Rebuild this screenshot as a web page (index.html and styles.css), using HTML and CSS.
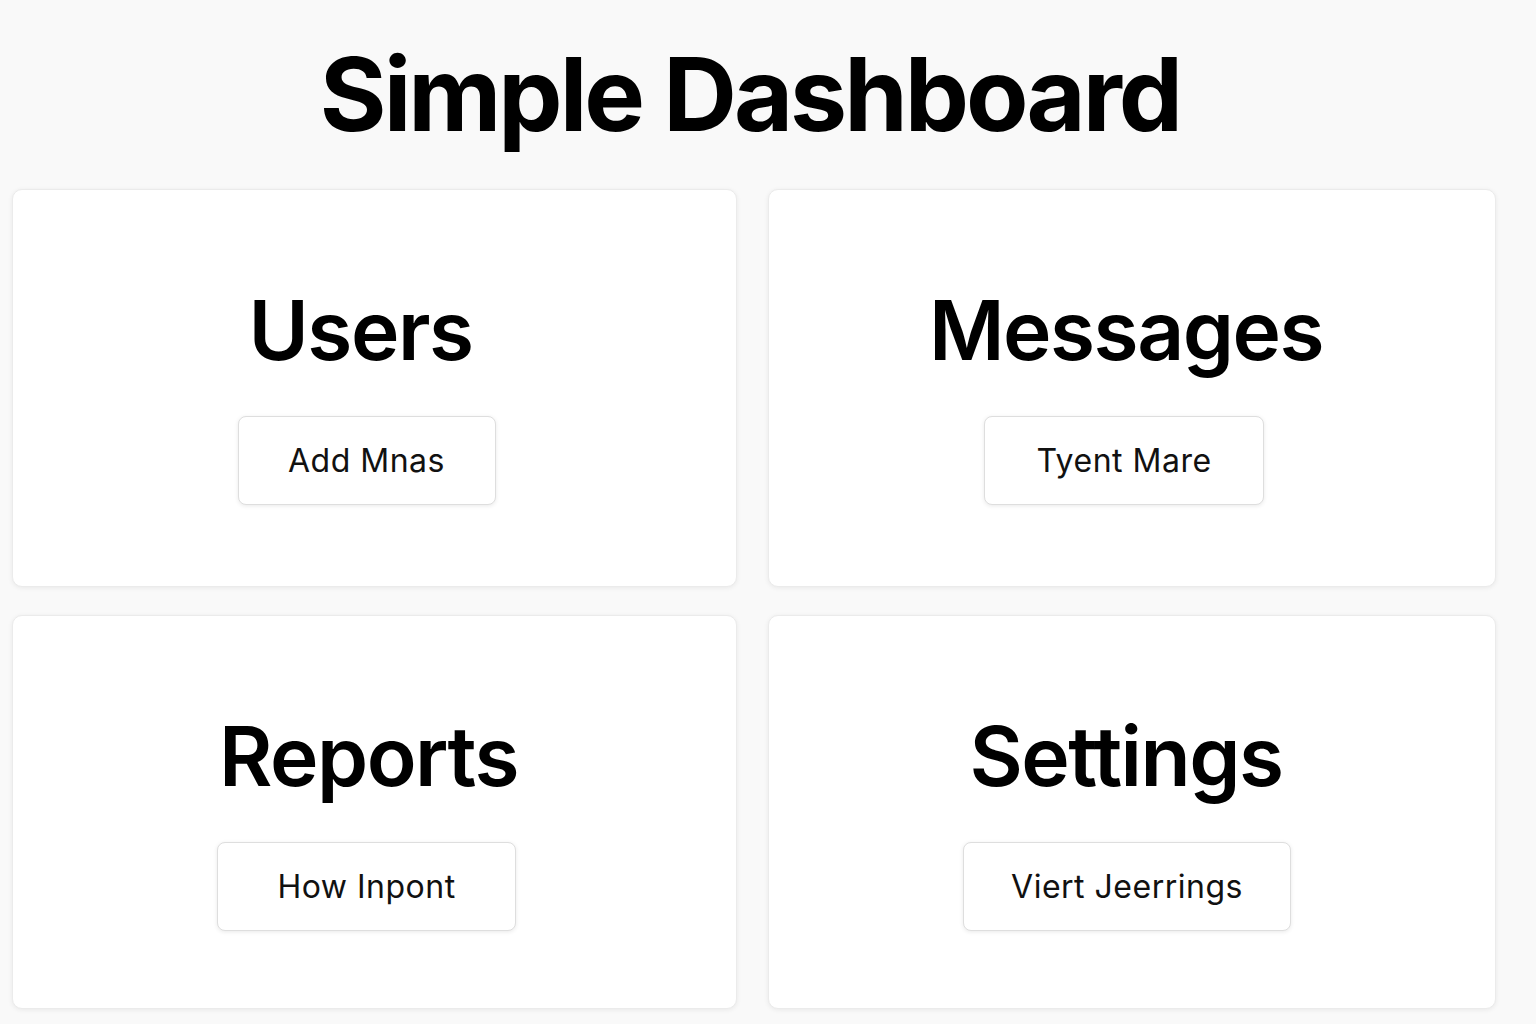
FILE: index.html
```html
<!DOCTYPE html>
<html lang="en">
<head>
<meta charset="utf-8">
<title>Simple Dashboard</title>
<link rel="stylesheet" href="styles.css">
</head>
<body>
  <header class="page-header">
    <h1 class="title">Simple Dashboard</h1>
  </header>
  <main class="grid">
    <section class="card">
      <h2 class="card-title title-users">Users</h2>
      <button class="btn btn-users">Add Mnas</button>
    </section>
    <section class="card">
      <h2 class="card-title">Messages</h2>
      <button class="btn btn-messages">Tyent Mare</button>
    </section>
    <section class="card">
      <h2 class="card-title">Reports</h2>
      <button class="btn btn-reports">How Inpont</button>
    </section>
    <section class="card">
      <h2 class="card-title">Settings</h2>
      <button class="btn btn-settings">Viert Jeerrings</button>
    </section>
  </main>
</body>
</html>
```
FILE: styles.css
```css
html, body {
  margin: 0;
  padding: 0;
}
body {
  background: #f9f9f9;
  font-family: Inter, "Liberation Sans", Arial, sans-serif;
  color: #000;
  width: 1536px;
  height: 1024px;
  overflow: hidden;
}
.page-header {
  display: flex;
  justify-content: center;
  padding: 43px 0 0 0;
  height: 151px;
  box-sizing: border-box;
}
.title {
  margin: 0 0 0 -36px;
  font-size: 102px;
  font-weight: 700;
  letter-spacing: -3px;
  line-height: 1;
}
.grid {
  display: grid;
  grid-template-columns: 725px 728px;
  grid-template-rows: 398px 394px;
  column-gap: 31px;
  row-gap: 28px;
  padding: 0 0 0 12px;
  margin-top: 38px;
}
.card {
  background: #fff;
  border: 1px solid #ebebeb;
  border-radius: 10px;
  box-shadow: 0 1px 5px rgba(0,0,0,0.07);
  display: flex;
  flex-direction: column;
  align-items: center;
  padding-top: 100px;
  box-sizing: border-box;
}
.card-title {
  margin: 0 0 44px -12px;
  font-size: 82px;
  font-weight: 600;
  letter-spacing: -1.5px;
  line-height: 1;
}
.title-users {
  margin-left: -28px;
}
.btn {
  font-family: Inter, "Liberation Sans", Arial, sans-serif;
  font-size: 32px;
  font-weight: 400;
  color: #111;
  background: #fff;
  border: 1px solid #dedede;
  border-radius: 8px;
  box-shadow: 0 1px 4px rgba(0,0,0,0.09);
  height: 89px;
  padding: 0;
  letter-spacing: 0.5px;
  margin-left: -16px;
}
.btn-users { width: 258px; }
.btn-messages { width: 280px; }
.btn-reports { width: 299px; }
.btn-settings { width: 328px; margin-left: -10px; }
```
